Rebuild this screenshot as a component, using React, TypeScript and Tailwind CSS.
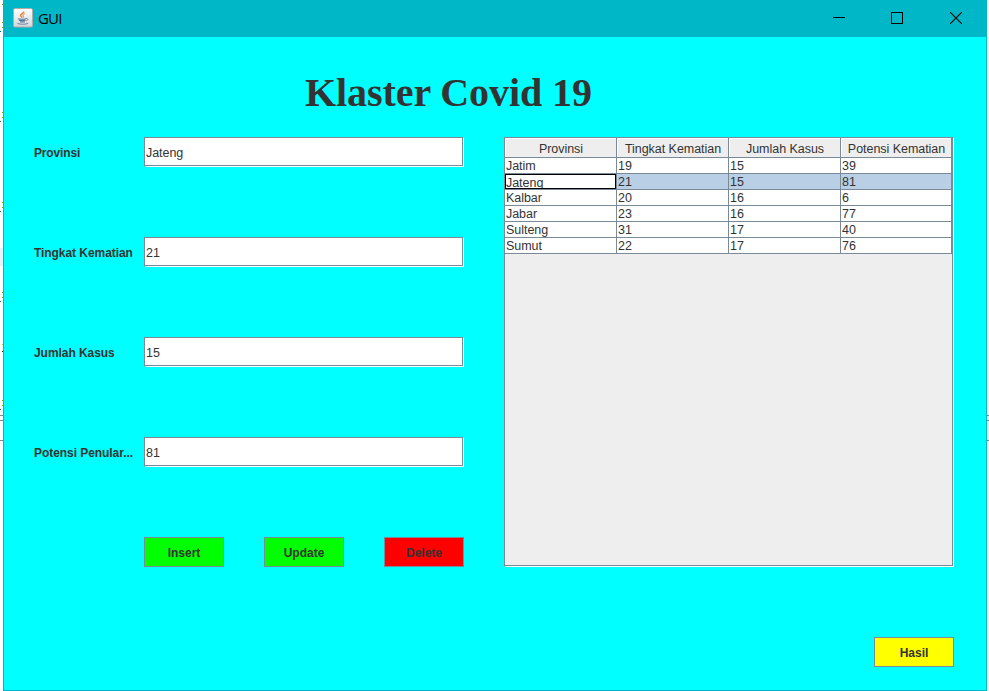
import React from 'react';

const fields = [
  { label: 'Provinsi', value: 'Jateng', spacing: 'tracking-[-0.15px]' },
  { label: 'Tingkat Kematian', value: '21', spacing: 'tracking-[-0.06px]' },
  { label: 'Jumlah Kasus', value: '15', spacing: 'tracking-[-0.06px]' },
  { label: 'Potensi Penular...', value: '81', spacing: 'tracking-[-0.06px]' },
];

const headers = ['Provinsi', 'Tingkat Kematian', 'Jumlah Kasus', 'Potensi Kematian'];

const rows = [
  ['Jatim', '19', '15', '39'],
  ['Jateng', '21', '15', '81'],
  ['Kalbar', '20', '16', '6'],
  ['Jabar', '23', '16', '77'],
  ['Sulteng', '31', '17', '40'],
  ['Sumut', '22', '17', '76'],
];

const selectedRow = 1;

function JavaIcon() {
  return (
    <svg width="20" height="20" viewBox="0 0 20 20" fill="none">
      <defs>
        <linearGradient id="tile" x1="0" y1="0" x2="0" y2="1">
          <stop offset="0" stopColor="#ffffff" />
          <stop offset="1" stopColor="#d3d6da" />
        </linearGradient>
      </defs>
      <rect x="0.5" y="0.5" width="19" height="18.5" rx="1.5" fill="url(#tile)" stroke="#b3abab" />
      <path d="M10.6 3.5c.8 1.800-3 2.400-3 4 .2 1 1.200 1.300 1.700 2.200" stroke="#e8833a" strokeWidth="1.500" />
      <path d="M12 5.600c-1.800.9-2.500 1.300-1.700 2.300.4.600.2 1.200-.3 1.700" stroke="#eda06a" strokeWidth="1.100" />
      <path d="M5 10.700c1.500.7 6.500.7 8 0" stroke="#6d8ba5" strokeWidth="1.200" />
      <path d="M6 12.300h6.500M7 13.900h4.800" stroke="#557a9a" strokeWidth="1.300" />
      <path d="M13 10.600c2.400-.6 2.500 1.500.2 2.300" stroke="#6d8ba5" />
      <path d="M4.500 15.200c1.600 1.300 8.600 1.300 10.500 0" stroke="#6d8ba5" strokeWidth="1.100" />
    </svg>
  );
}

function TitleBar() {
  return (
    <header className="flex h-[37px] shrink-0 items-start bg-[#00b7c8] text-black">
      <div className="ml-[9px] mt-2">
        <JavaIcon />
      </div>
      <span className="ml-[5px] mt-[7px] font-['Open_Sans',sans-serif] text-[15px] leading-[22px] tracking-[-0.8px]">GUI</span>
      <div className="ml-auto mr-[24px] mt-[12px] flex gap-[46px]">
        <svg width="12" height="12" shapeRendering="crispEdges"><path d="M0 5.5h12" stroke="#000" /></svg>
        <svg width="12" height="12" shapeRendering="crispEdges"><rect x=".5" y=".5" width="11" height="11" fill="none" stroke="#000" /></svg>
        <svg width="12" height="12" className="ml-px"><path d="M.3 .3l11.400 11.400M11.700 .3l-11.400 11.400" stroke="#000" strokeWidth="1.100" /></svg>
      </div>
    </header>
  );
}

function ActionButton({ label, color }: { label: string; color: string }) {
  return (
    <button className={`h-[30px] w-20 border border-[#7a8a99] pt-px text-center text-[12px] font-bold leading-[28px] text-[#333] ${color}`}>
      {label}
    </button>
  );
}

function DataTable() {
  return (
    <div className="mb-px mr-px h-[429px] border border-[#7a8a99] bg-[#eee] shadow-[1px_1px_0_#fff]">
      <div className="grid h-5 grid-cols-[112px_112px_112px_111px] text-[12.5px] tracking-[-0.04px]">
        {headers.map((h) => (
          <div key={h} className="border-b border-r border-[#7a8a99]">
            <div className="h-[19px] whitespace-nowrap border-l border-t border-white pt-px text-center leading-[18px]">{h}</div>
          </div>
        ))}
      </div>
      {rows.map((row, r) => (
        <div key={row[0]} className="grid h-4 grid-cols-[112px_112px_112px_111px] text-[12.5px] tracking-[-0.04px]">
          {row.map((cell, c) => {
            const focused = r === selectedRow && c === 0;
            return (
              <div key={c} className={`border-b border-r border-[#7a8a99] ${r === selectedRow && !focused ? 'bg-[#b8cfe5]' : 'bg-white'}`}>
                <div className={focused ? 'h-[15px] overflow-hidden border border-black leading-[17px]' : 'h-[15px] pl-px leading-[17px]'}>{cell}</div>
              </div>
            );
          })}
        </div>
      ))}
    </div>
  );
}

const leftSpecks = [
  'top-[4px] left-[2px] bg-[#a2a200]', 'top-[22px] left-[2px] bg-[#a2a200]', 'top-[27px] left-[2px] bg-[#a2a200]', 'top-[31px] left-0 bg-[#008080]',
  'top-[112px] left-[2px] bg-[#a2a200]', 'top-[117px] left-[2px] bg-[#a2a200]', 'top-[121px] left-0 bg-[#008060]',
  'top-[202px] left-[2px] bg-[#a2a200]', 'top-[207px] left-[2px] bg-[#a2a200]', 'top-[211px] left-0 bg-[#008060]',
  'top-[292px] left-[2px] bg-[#a2a200]', 'top-[297px] left-[2px] bg-[#a2a200]', 'top-[301px] left-0 bg-[#008060]',
  'top-[344px] left-[2px] bg-[#e8a030]', 'top-[351px] left-[2px] bg-[#302000]',
  'top-[400px] left-[2px] bg-[#a2a200]', 'top-[405px] left-[2px] bg-[#a2a200]', 'top-[409px] left-0 bg-[#008060]',
];

export default function App() {
  return (
    <div className="relative flex h-[691px] w-[989px] overflow-hidden bg-white font-['Liberation_Sans',Arial,sans-serif] text-[#333]">
      <div className="w-[3px] shrink-0">
        <div className="absolute left-0 top-[248px] h-[18px] w-[3px] bg-[#e8f0fa]" />
        {leftSpecks.map((s) => (
          <i key={s} className={`absolute h-px w-px ${s}`} />
        ))}
        <div className="absolute left-0 top-[415px] h-[6px] w-[3px] border-y border-[#828790]" />
        <div className="absolute left-0 top-[440px] h-px w-[3px] bg-[#828790]" />
      </div>
      <main className="flex h-[691px] w-[984px] shrink-0 flex-col border-x border-b border-[#00b7c8] bg-[#0ff]">
        <TitleBar />
        <h1 className="ml-[301px] mt-[32px] h-[48px] whitespace-nowrap font-['Liberation_Serif','Times_New_Roman',serif] text-[40px] font-bold leading-[48px] tracking-[-0.08px]">Klaster Covid 19</h1>
        <div className="ml-[30px] mt-[20px] flex h-[430px]">
          <section className="w-[430px]">
            {fields.map((f) => (
              <div key={f.label} className="mb-[70px] flex h-[30px]">
                <label className={`w-[110px] whitespace-nowrap pt-px text-[12px] font-bold leading-[30px] ${f.spacing}`}>{f.label}</label>
                <div className="h-[29px] w-[319px] border border-[#7a8a99] bg-white pl-px pt-px text-[12.5px] leading-[28px] tracking-[-0.06px] shadow-[1px_1px_0_#fff]">{f.value}</div>
              </div>
            ))}
            <div className="ml-[110px] flex gap-10">
              <ActionButton label="Insert" color="bg-[#0f0]" />
              <ActionButton label="Update" color="bg-[#0f0]" />
              <ActionButton label="Delete" color="bg-[#f00]" />
            </div>
          </section>
          <section className="ml-10 w-[450px]">
            <DataTable />
          </section>
        </div>
        <div className="mr-[32px] mt-[70px] flex justify-end">
          <ActionButton label="Hasil" color="bg-[#ff0]" />
        </div>
      </main>
      <div className="mt-[415px] h-[26px] w-[2px] border-y border-[#828790] bg-[#eee]">
        <div className="mt-[4px] h-px bg-[#828790]" />
      </div>
    </div>
  );
}
